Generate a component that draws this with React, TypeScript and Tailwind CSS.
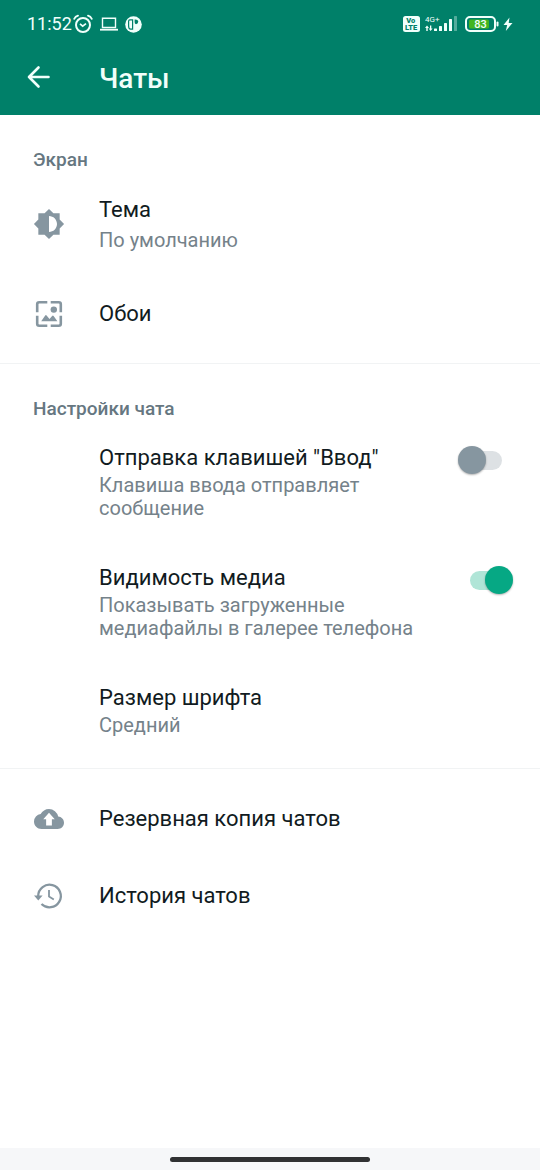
import { useState } from "react";
import type { ReactNode } from "react";
import { MdBrightness6 } from "react-icons/md";

function AlarmIcon() {
  return (
    <svg viewBox="0 0 20 20" className="h-5 w-5" fill="none" stroke="currentColor" aria-hidden="true">
      <circle cx="10" cy="11" r="7" strokeWidth="2" />
      <path d="M7 9.8 9.7 12.2 13 9.6" strokeWidth="1.7" />
      <path d="M1.2 4.8Q2.4 2.4 5 1.6M18.8 4.8Q17.6 2.4 15 1.6" strokeWidth="1.8" strokeLinecap="round" />
    </svg>
  );
}

function LaptopIcon() {
  return (
    <svg viewBox="0 0 18 14" className="h-[14px] w-[18px]" fill="none" stroke="currentColor" aria-hidden="true">
      <path d="M2.5 1.2h13v9.3h-13z" strokeWidth="1.4" />
      <path d="M0 12.7h18" strokeWidth="1.8" />
    </svg>
  );
}

function AppBadgeIcon() {
  return (
    <svg viewBox="0 0 17 17" className="h-[17px] w-[17px]" aria-hidden="true">
      <circle cx="8.5" cy="8.5" r="8.3" fill="currentColor" />
      <path d="M4.8 3.8h2.8v9.4H5.6Q3.6 13 3.6 10V5.2Q3.6 3.8 4.8 3.8z" fill="none" stroke="#008069" strokeWidth="1.2" />
      <path d="M9.6 3.4Q13 3.2 13.2 5.6T11 8.2Q9.6 8 9.6 6z" fill="#008069" />
    </svg>
  );
}

function SignalIcon() {
  return (
    <svg viewBox="0 0 34 18" className="h-[18px] w-[34px]" fill="currentColor" aria-hidden="true">
      <text x="0" y="7" fontSize="8" fontFamily="Roboto, sans-serif">4G+</text>
      <path d="M2 10.5 4 13H2.7v3H1.3v-3H0zM5.6 16 3.7 13.4H5v-3h1.3v3h1.3z" />
      <rect x="9" y="13.5" width="3" height="2.5" rx=".6" />
      <rect x="14" y="11" width="3" height="5" rx=".6" />
      <rect x="19" y="8" width="3" height="8" rx=".6" />
      <rect x="24" y="4" width="3" height="12" rx=".6" />
      <rect x="29" y="1" width="3" height="15" rx=".6" opacity=".35" />
    </svg>
  );
}

function VolteIcon() {
  return (
    <svg viewBox="0 0 18 16" className="h-4 w-[18px]" aria-label="VoLTE">
      <rect width="17" height="16" rx="2.5" fill="currentColor" />
      <g fill="#008069" fontFamily="Roboto, sans-serif" fontWeight="900" fontSize="7.5">
        <text x="3.2" y="7.3">Vo</text>
        <text x="2" y="14.3">LTE</text>
      </g>
    </svg>
  );
}

function BatteryIcon() {
  return (
    <svg viewBox="0 0 48 18" className="h-[18px] w-12" aria-label="83%">
      <rect x="1" y="2" width="29" height="14" rx="4" fill="none" stroke="currentColor" strokeWidth="2" />
      <rect x="4" y="4.5" width="20" height="9" rx="1.5" fill="#43b51f" />
      <path d="M32.5 7.5v3" stroke="currentColor" strokeWidth="2" strokeLinecap="round" />
      <text x="15.5" y="13" textAnchor="middle" fill="currentColor" fontFamily="Roboto, sans-serif" fontWeight="500" fontSize="11">83</text>
      <path d="M44.5 2.5 38.5 10h3.7l-1.4 6L47.5 8h-3.8z" fill="currentColor" />
    </svg>
  );
}

function BackIcon() {
  return (
    <svg viewBox="0 0 24 24" className="h-6 w-6" fill="none" stroke="currentColor" strokeWidth="2.6" strokeLinecap="round" strokeLinejoin="round" aria-hidden="true">
      <path d="M21.5 12H2M11.5 2.5 2 12l9.5 9.5" />
    </svg>
  );
}

function WallpaperIcon() {
  return (
    <svg viewBox="0 0 28 28" className="h-7 w-7" aria-hidden="true">
      <path d="M2.2 12.3V4.2q0-2 2-2h8.1M15.7 2.2h8.1q2 0 2 2v8.1M25.8 15.7v8.1q0 2-2 2h-8.1M12.3 25.8H4.2q-2 0-2-2v-8.1" fill="none" stroke="currentColor" strokeWidth="2.6" />
      <circle cx="18.8" cy="9.6" r="3.2" fill="currentColor" />
      <path d="M6.2 21.2 10.2 15.4q.7-.8 1.4 0l2.9 3.6 2.6-3q.8-.8 1.5 0L22.4 21.2z" fill="currentColor" />
    </svg>
  );
}

function CloudUploadIcon() {
  return (
    <svg viewBox="0 0 24 24" className="h-[30px] w-[30px]" fill="currentColor" aria-hidden="true">
      <path d="M19.35 10.04A7.49 7.49 0 0 0 12 4C9.11 4 6.6 5.64 5.35 8.04A5.994 5.994 0 0 0 0 14c0 3.31 2.69 6 6 6h13c2.76 0 5-2.24 5-5 0-2.64-2.05-4.78-4.65-4.96z" />
      <path d="M12 7 7.4 12.2h2.3v4.9h4.6v-4.9h2.3z" fill="#ffffff" />
    </svg>
  );
}

function HistoryIcon() {
  return (
    <svg viewBox="0 0 30 28" className="h-7 w-[30px]" fill="none" stroke="currentColor" aria-hidden="true">
      <path d="M4.2 15.5V14A11.3 11.3 0 1 1 7.5 22" strokeWidth="2.3" />
      <path d="M0 13.6h8.6l-4.3 4.8z" fill="currentColor" stroke="none" />
      <path d="M15 8v6.5l4.8 3" strokeWidth="1.8" />
    </svg>
  );
}

function Divider() {
  return <hr className="border-0 border-t border-[#f1f3f4]" />;
}

function SectionTitle({ children }: { children: ReactNode }) {
  return <h2 className="px-[33px] pb-px text-[19px] leading-6 font-medium text-[#667781]">{children}</h2>;
}

function IconRow({ icon, title, detail }: { icon: ReactNode; title: string; detail?: string }) {
  return (
    <button type="button" className="flex min-h-[77px] w-full items-center px-8 py-[23px] text-left">
      <span className="flex w-[34px] shrink-0 justify-center text-[#8696a0]">{icon}</span>
      <span className="ml-[33px] flex flex-col gap-[5px]">
        <span className="text-[22px] leading-7 text-[#111b21]">{title}</span>
        {detail && <span className="text-[20px] leading-[23px] text-[#75828a]">{detail}</span>}
      </span>
    </button>
  );
}

function SwitchRow({ id, title, detail, initial }: { id: string; title: string; detail: string; initial: boolean }) {
  const [on, setOn] = useState(initial);
  return (
    <div className="flex py-[22px] pr-[27px] pl-[99px]">
      <label htmlFor={id} className="flex flex-1 flex-col gap-[2px]">
        <span className="text-[22px] leading-7 text-[#111b21]">{title}</span>
        <span className="max-w-[320px] text-[20px] leading-[23px] text-[#75828a]">{detail}</span>
      </label>
      <span className="relative mt-[2px] flex h-7 w-[55px] shrink-0 items-center justify-center">
        <input
          id={id}
          type="checkbox"
          role="switch"
          checked={on}
          onChange={() => setOn(!on)}
          className="peer h-[19px] w-8 appearance-none rounded-full bg-[#dde1e4] checked:bg-[#b0e5d7]"
        />
        <span className="pointer-events-none absolute top-0 left-0 h-7 w-7 rounded-full bg-[#8696a0] shadow-[0_1px_2px_rgba(0,0,0,0.3)] peer-checked:left-[27px] peer-checked:bg-[#06a884]" />
      </span>
    </div>
  );
}

export default function App() {
  return (
    <div className="flex min-h-screen flex-col bg-white font-[Roboto,sans-serif]">
      <header className="bg-[#008069] pb-[17px] text-[#f1fffb]">
        <div className="flex h-12 items-center justify-between px-[27px]">
          <div className="flex items-center">
            <time className="w-[46px] text-[18px] leading-6">11:52</time>
            <AlarmIcon />
            <span className="ml-[7px]">
              <LaptopIcon />
            </span>
            <span className="ml-[7px]">
              <AppBadgeIcon />
            </span>
          </div>
          <div className="flex items-center">
            <VolteIcon />
            <span className="ml-1">
              <SignalIcon />
            </span>
            <span className="ml-1.5">
              <BatteryIcon />
            </span>
          </div>
        </div>
        <div className="flex h-[50px] items-center pt-[7px] pl-[27px]">
          <button type="button" aria-label="Назад">
            <BackIcon />
          </button>
          <h1 className="ml-12 pt-1 text-[28px] leading-9 font-medium">Чаты</h1>
        </div>
      </header>

      <main className="flex-1">
        <section className="pt-[33px] pb-[11px]">
          <SectionTitle>Экран</SectionTitle>
          <IconRow icon={<MdBrightness6 size={32} />} title="Тема" detail="По умолчанию" />
          <IconRow icon={<WallpaperIcon />} title="Обои" />
        </section>
        <Divider />
        <section className="pt-[33px] pb-[9px]">
          <SectionTitle>Настройки чата</SectionTitle>
          <SwitchRow id="enter" title='Отправка клавишей "Ввод"' detail="Клавиша ввода отправляет сообщение" initial={false} />
          <SwitchRow id="media" title="Видимость медиа" detail="Показывать загруженные медиафайлы в галерее телефона" initial />
          <button type="button" className="flex w-full flex-col gap-[2px] py-[22px] pr-[27px] pl-[99px] text-left">
            <span className="text-[22px] leading-7 text-[#111b21]">Размер шрифта</span>
            <span className="text-[20px] leading-[23px] text-[#75828a]">Средний</span>
          </button>
        </section>
        <Divider />
        <section className="pt-[11px]">
          <IconRow icon={<CloudUploadIcon />} title="Резервная копия чатов" />
          <IconRow icon={<HistoryIcon />} title="История чатов" />
        </section>
      </main>

      <footer className="flex h-[22px] items-center justify-center bg-[#f6f7f9]">
        <div className="h-[5px] w-[200px] rounded-full bg-[#303133]" />
      </footer>
    </div>
  );
}
